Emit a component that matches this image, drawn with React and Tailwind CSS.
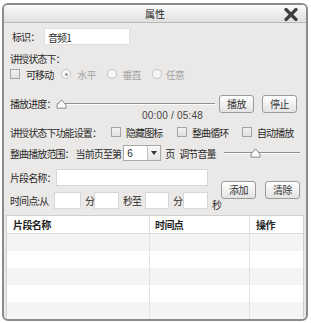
const cjk = "font-['Noto_Sans_CJK_SC','Liberation_Sans',sans-serif]"

function Btn({ children, className = '' }) {
  return (
    <div className={`h-[18px] w-[35px] rounded-[3px] border border-[#9b9b9b] bg-gradient-to-b from-[#ffffff] to-[#e3e3e3] flex items-center justify-center text-[10px] tracking-[-0.5px] text-[#333] leading-none ${className}`}>
      {children}
    </div>
  )
}

function Check() {
  return <div className="w-[10px] h-[10px] border border-[#a5a5a5] bg-gradient-to-b from-[#f2f2f2] to-[#e0e0e0] shrink-0" />
}

function Radio({ on }) {
  return (
    <div className="w-[10px] h-[10px] rounded-full border border-[#c4c4c4] bg-[#f6f6f6] flex items-center justify-center shrink-0">
      {on && <div className="w-[3px] h-[3px] rounded-full bg-[#9a9a9a]" />}
    </div>
  )
}

function Thumb() {
  return (
    <svg width="11" height="10" viewBox="0 0 11 10" className="shrink-0">
      <path d="M5.5 0.8 L10 6 L10 9.2 L1 9.2 L1 6 Z" fill="#fbfbfb" stroke="#8a8a8a" strokeWidth="1" />
    </svg>
  )
}

function Slider({ width, pos }) {
  return (
    <div className="relative h-[12px] flex items-center shrink-0" style={{ width }}>
      <div className="w-full h-[2px] border-t border-[#8f8f8f] border-b border-b-[#fdfdfd]" />
      <div className="absolute top-[1px]" style={{ left: pos }}><Thumb /></div>
    </div>
  )
}

function Box({ w, className = '' }) {
  return <div className={`h-[17px] bg-white border border-[#d6d6d6] shrink-0 ${className}`} style={{ width: w }} />
}

export default function App() {
  const rows = [0, 1, 2, 3, 4]
  return (
    <div className={`w-[311px] h-[323px] bg-white pl-[2px] pr-[3px] pt-[3px] whitespace-nowrap ${cjk}`}>
      <div className="h-[318px] rounded-[6px] border-2 border-[#8c8c8c] bg-[#ebe9e7] overflow-hidden flex flex-col">
        {/* title */}
        <div className="relative h-[18px] bg-gradient-to-b from-[#fbfbfb] to-[#dfdfdf] border-b border-[#b8b8b8] flex items-center justify-center text-[10px] text-[#222] shrink-0">
          属性
          <svg width="14" height="13" viewBox="0 0 14 13" className="absolute right-[8px] top-[3px]">
            <path d="M2 1.5 L12 11.5 M12 1.5 L2 11.5" stroke="#3f3f3f" strokeWidth="3.2" strokeLinecap="round" />
          </svg>
        </div>

        <div className="flex flex-col px-[6px] text-[10px] tracking-[-0.9px] text-[#2a2a2a]">
          {/* 标识 */}
          <div className="flex items-center mt-[5px] h-[17px]">
            <span className="w-[32px] ml-[2px]">标识：</span>
            <div className="w-[86px] h-[17px] bg-white border border-[#e0e0e0] flex items-center pl-[3px] pt-[2px]">音频1</div>
          </div>

          <div className="mt-[7px] h-[14px] leading-[14px]">讲授状态下：</div>

          <div className="mt-[1px] h-[14px] flex items-center">
            <Check />
            <span className="ml-[6px]">可移动</span>
            <div className="ml-[8px]"><Radio on /></div>
            <span className="ml-[6px] text-[#a5a5a5]">水平</span>
            <div className="ml-[11px]"><Radio /></div>
            <span className="ml-[6px] text-[#a5a5a5]">垂直</span>
            <div className="ml-[11px]"><Radio /></div>
            <span className="ml-[4px] text-[#a5a5a5]">任意</span>
          </div>

          {/* 播放进度 */}
          <div className="mt-[14px] h-[17px] flex items-center">
            <span className="w-[47px]">播放进度：</span>
            <Slider width={158} pos={-1} />
            <Btn className="ml-[4px]">播放</Btn>
            <Btn className="ml-[8px]">停止</Btn>
          </div>
          <div className="-mt-[2px] h-[12px] leading-[12px] pl-[132px] text-[10px] text-[#444] font-['Liberation_Sans',sans-serif] tracking-[0.2px]">00:00 / 05:48</div>

          {/* 功能设置 */}
          <div className="mt-[3px] h-[14px] flex items-center">
            <span className="w-[101px]">讲授状态下功能设置：</span>
            <Check />
            <span className="ml-[5px] w-[51px]">隐藏图标</span>
            <Check />
            <span className="ml-[5px] w-[50px]">整曲循环</span>
            <Check />
            <span className="ml-[5px]">自动播放</span>
          </div>

          {/* 范围 */}
          <div className="mt-[6px] h-[16px] flex items-center">
            <span className="w-[66px]">整曲播放范围：</span>
            <span className="w-[48px]">当前页至第</span>
            <div className="w-[38px] h-[16px] bg-white border border-[#a9a9a9] flex items-center shrink-0">
              <span className="flex-1 pl-[3px] text-[10px] font-['Liberation_Sans',sans-serif]">6</span>
              <div className="w-[13px] h-full border-l border-[#c4c4c4] bg-gradient-to-b from-[#fafafa] to-[#e4e4e4] flex items-center justify-center">
                <div className="w-0 h-0 border-l-[3px] border-r-[3px] border-t-[4px] border-l-transparent border-r-transparent border-t-[#333]" />
              </div>
            </div>
            <span className="ml-[4px] w-[14px]">页</span>
            <span className="w-[38px]">调节音量</span>
            <div className="ml-[7px]"><Slider width={76} pos={26} /></div>
          </div>

          {/* 片段 */}
          <div className="mt-[8px] flex">
            <div className="flex flex-col">
              <div className="h-[17px] flex items-center">
                <span className="w-[46px]">片段名称：</span>
                <Box w={152} />
              </div>
              <div className="mt-[6px] h-[17px] flex items-center">
                <span className="w-[44px]">时间点:从</span>
                <Box w={27} />
                <span className="ml-[4px] w-[9px]">分</span>
                <Box w={25} />
                <span className="ml-[4px] w-[22px]">秒至</span>
                <Box w={24} />
                <span className="ml-[4px] w-[10px]">分</span>
                <Box w={25} />
                <span className="ml-[4px] mt-[7px]">秒</span>
              </div>
            </div>
            <div className="flex mt-[12px] ml-auto mr-[1px]">
              <Btn>添加</Btn>
              <Btn className="ml-[9px]">清除</Btn>
            </div>
          </div>
        </div>

        {/* table */}
        <div className="mx-[2px] mt-[6px] h-[102px] bg-white border border-[#d0d0d0] flex flex-col text-[10px] tracking-[-0.6px] text-[#222]">
          <div className="h-[18px] flex font-bold border-b border-[#dadada] shrink-0">
            <div className="w-[143px] pl-[6px] flex items-center border-r border-[#dedede]">片段名称</div>
            <div className="w-[100px] pl-[5px] flex items-center border-r border-[#dedede]">时间点</div>
            <div className="flex-1 pl-[6px] flex items-center">操作</div>
          </div>
          {rows.map(i => (
            <div key={i} className={`h-[17px] flex shrink-0 ${i % 2 === 0 ? 'bg-[#f4f4f4]' : 'bg-white'}`}>
              <div className="w-[143px] border-r border-[#e2e2e2]" />
              <div className="w-[100px] border-r border-[#e2e2e2]" />
              <div className="flex-1" />
            </div>
          ))}
        </div>
      </div>
    </div>
  )
}
